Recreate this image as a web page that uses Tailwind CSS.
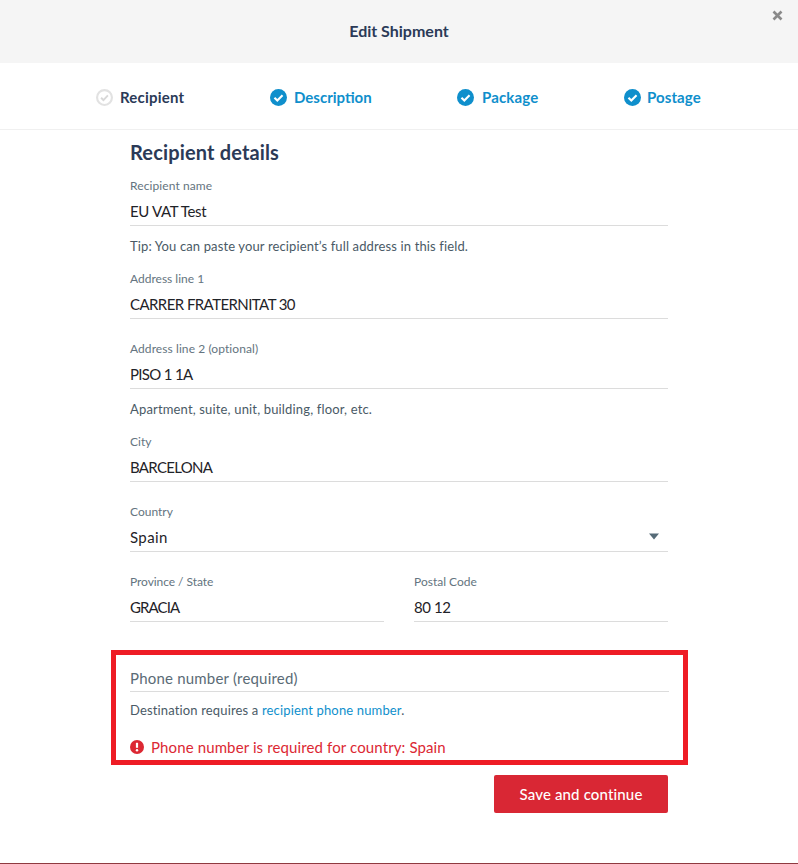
<!DOCTYPE html>
<html><head><meta charset="utf-8"><script src="https://cdn.jsdelivr.net/npm/@tailwindcss/browser@4"></script></head>
<body class="bg-white">
<div class="w-[798px] h-[864px] overflow-hidden relative font-['Lato','Noto_Sans',sans-serif] border-b border-[#8f3a40]">
  <header class="h-[63px] bg-[#f5f5f5] flex items-center justify-center pb-[2px]">
    <h1 class="text-[16px] font-bold text-[#2b3a57]">Edit Shipment</h1>
  </header>
  <svg class="absolute left-[772px] top-[10px] w-[11px] h-[11px]" viewBox="0 0 11 11"><path d="M1.5 1.5l8 8M9.5 1.5l-8 8" stroke="#8a8a8a" stroke-width="2.6"/></svg>
  <nav class="h-[67px] border-b border-[#f0f0f0] relative">
    <div class="absolute top-[23px] left-[96px] flex items-center gap-[7px]">
      <svg class="w-[17px] h-[17px]" viewBox="0 0 16 16"><circle cx="8" cy="8" r="7" fill="none" stroke="#e2e2e2" stroke-width="2"/><path d="M4.8 8.2l2.2 2.2 4.2-4.4" fill="none" stroke="#d8d8d8" stroke-width="1.8"/></svg>
      <span class="text-[15px] tracking-[0.2px] font-bold text-[#2b3a57]">Recipient</span>
    </div>
    <div class="absolute top-[23px] left-[270px] flex items-center gap-[7px]">
      <svg class="w-[17px] h-[17px]" viewBox="0 0 16 16"><circle cx="8" cy="8" r="8" fill="#0f8fcc"/><path d="M4.2 8.2l2.7 2.7 4.9-5" fill="none" stroke="#fff" stroke-width="2"/></svg>
      <span class="text-[15px] font-bold text-[#0f8fcc]">Description</span>
    </div>
    <div class="absolute top-[23px] left-[457px] flex items-center gap-[8px]">
      <svg class="w-[17px] h-[17px]" viewBox="0 0 16 16"><circle cx="8" cy="8" r="8" fill="#0f8fcc"/><path d="M4.2 8.2l2.7 2.7 4.9-5" fill="none" stroke="#fff" stroke-width="2"/></svg>
      <span class="text-[15px] tracking-[0.15px] font-bold text-[#0f8fcc]">Package</span>
    </div>
    <div class="absolute top-[23px] left-[624px] flex items-center gap-[6px]">
      <svg class="w-[17px] h-[17px]" viewBox="0 0 16 16"><circle cx="8" cy="8" r="8" fill="#0f8fcc"/><path d="M4.2 8.2l2.7 2.7 4.9-5" fill="none" stroke="#fff" stroke-width="2"/></svg>
      <span class="text-[15px] tracking-[0.1px] font-bold text-[#0f8fcc]">Postage</span>
    </div>
  </nav>
  <main class="ml-[130px] w-[538px]">
    <h2 class="mt-[9px] h-[27px] leading-[27px] text-[20px] tracking-[0.15px] font-bold text-[#2b3a57]">Recipient details</h2>
    <div class="mt-[14px] h-[12px] leading-[12px] text-[12px] tracking-[0.1px] text-[#647480]">Recipient name</div>
    <div class="mt-[6px] h-[28px] leading-[26px] text-[15px] tracking-[-0.35px] text-[#1f2328] border-b border-[#dcdcdc]">EU VAT Test</div>
    <p class="mt-[12px] h-[16px] leading-[16px] text-[13px] tracking-[0.13px] text-[#4a5a66]">Tip: You can paste your recipient’s full address in this field.</p>
    <div class="mt-[19px] h-[12px] leading-[12px] text-[12px] text-[#647480]">Address line 1</div>
    <div class="mt-[6px] h-[28px] leading-[26px] text-[15px] tracking-[-0.57px] text-[#1f2328] border-b border-[#dcdcdc]">CARRER FRATERNITAT 30</div>
    <div class="mt-[24px] h-[12px] leading-[12px] text-[12px] tracking-[0.08px] text-[#647480]">Address line 2 (optional)</div>
    <div class="mt-[6px] h-[28px] leading-[26px] text-[15px] tracking-[-0.67px] text-[#1f2328] border-b border-[#dcdcdc]">PISO 1 1A</div>
    <p class="mt-[12px] h-[16px] leading-[16px] text-[13px] tracking-[0.16px] text-[#4a5a66]">Apartment, suite, unit, building, floor, etc.</p>
    <div class="mt-[19px] h-[12px] leading-[12px] text-[12px] text-[#647480]">City</div>
    <div class="mt-[6px] h-[28px] leading-[26px] text-[15px] tracking-[-0.7px] text-[#1f2328] border-b border-[#dcdcdc]">BARCELONA</div>
    <div class="mt-[24px] h-[12px] leading-[12px] text-[12px] text-[#647480]">Country</div>
    <div class="mt-[6px] h-[28px] pb-[2px] leading-[26px] text-[15px] tracking-[0.4px] text-[#1f2328] border-b border-[#dcdcdc] flex items-center justify-between">
      <span>Spain</span>
      <svg class="w-[12px] h-[7px] mr-[8px]" viewBox="0 0 12 7"><path d="M1 0.5h10l-5 6z" fill="#566b78"/></svg>
    </div>
    <div class="mt-[24px] grid grid-cols-[254px_254px] gap-x-[30px]">
      <div>
        <div class="h-[12px] leading-[12px] text-[12px] tracking-[-0.06px] text-[#647480]">Province / State</div>
        <div class="mt-[6px] h-[28px] leading-[26px] text-[15px] tracking-[-0.9px] text-[#1f2328] border-b border-[#dcdcdc]">GRACIA</div>
      </div>
      <div>
        <div class="h-[12px] leading-[12px] text-[12px] text-[#647480]">Postal Code</div>
        <div class="mt-[6px] h-[28px] leading-[26px] text-[15px] tracking-[-0.4px] text-[#1f2328] border-b border-[#dcdcdc]">80 12</div>
      </div>
    </div>
  </main>
  <section class="ml-[111px] mt-[28px] w-[577px] h-[115px] border-[5px] border-[#ee1c25] px-[14px]">
    <div class="mt-[12px] h-[25px] leading-[22px] text-[15px] tracking-[0.2px] text-[#5a6b76] border-b border-[#dcdcdc]">Phone number (required)</div>
    <p class="mt-[10px] h-[16px] leading-[16px] text-[13px] tracking-[0.15px] text-[#4a5a66]">Destination requires a <a class="text-[#0f8fcc]">recipient phone number</a>.</p>
    <div class="mt-[18px] flex items-center gap-[7px] text-[15px] tracking-[0.12px] text-[#dc2833]">
      <svg class="w-[14px] h-[14px]" viewBox="0 0 14 14"><circle cx="7" cy="7" r="7" fill="#dc2833"/><path d="M7 2.8v5" stroke="#fff" stroke-width="2.2"/><circle cx="7" cy="10.3" r="1.2" fill="#fff"/></svg>
      <span>Phone number is required for country: Spain</span>
    </div>
  </section>
  <div class="ml-[130px] w-[538px] mt-[10px] flex justify-end">
    <button class="w-[174px] h-[38px] rounded-[2px] bg-[#d92734] text-white text-[15px] tracking-[0.15px] font-medium">Save and continue</button>
  </div>
</div>
</body></html>
